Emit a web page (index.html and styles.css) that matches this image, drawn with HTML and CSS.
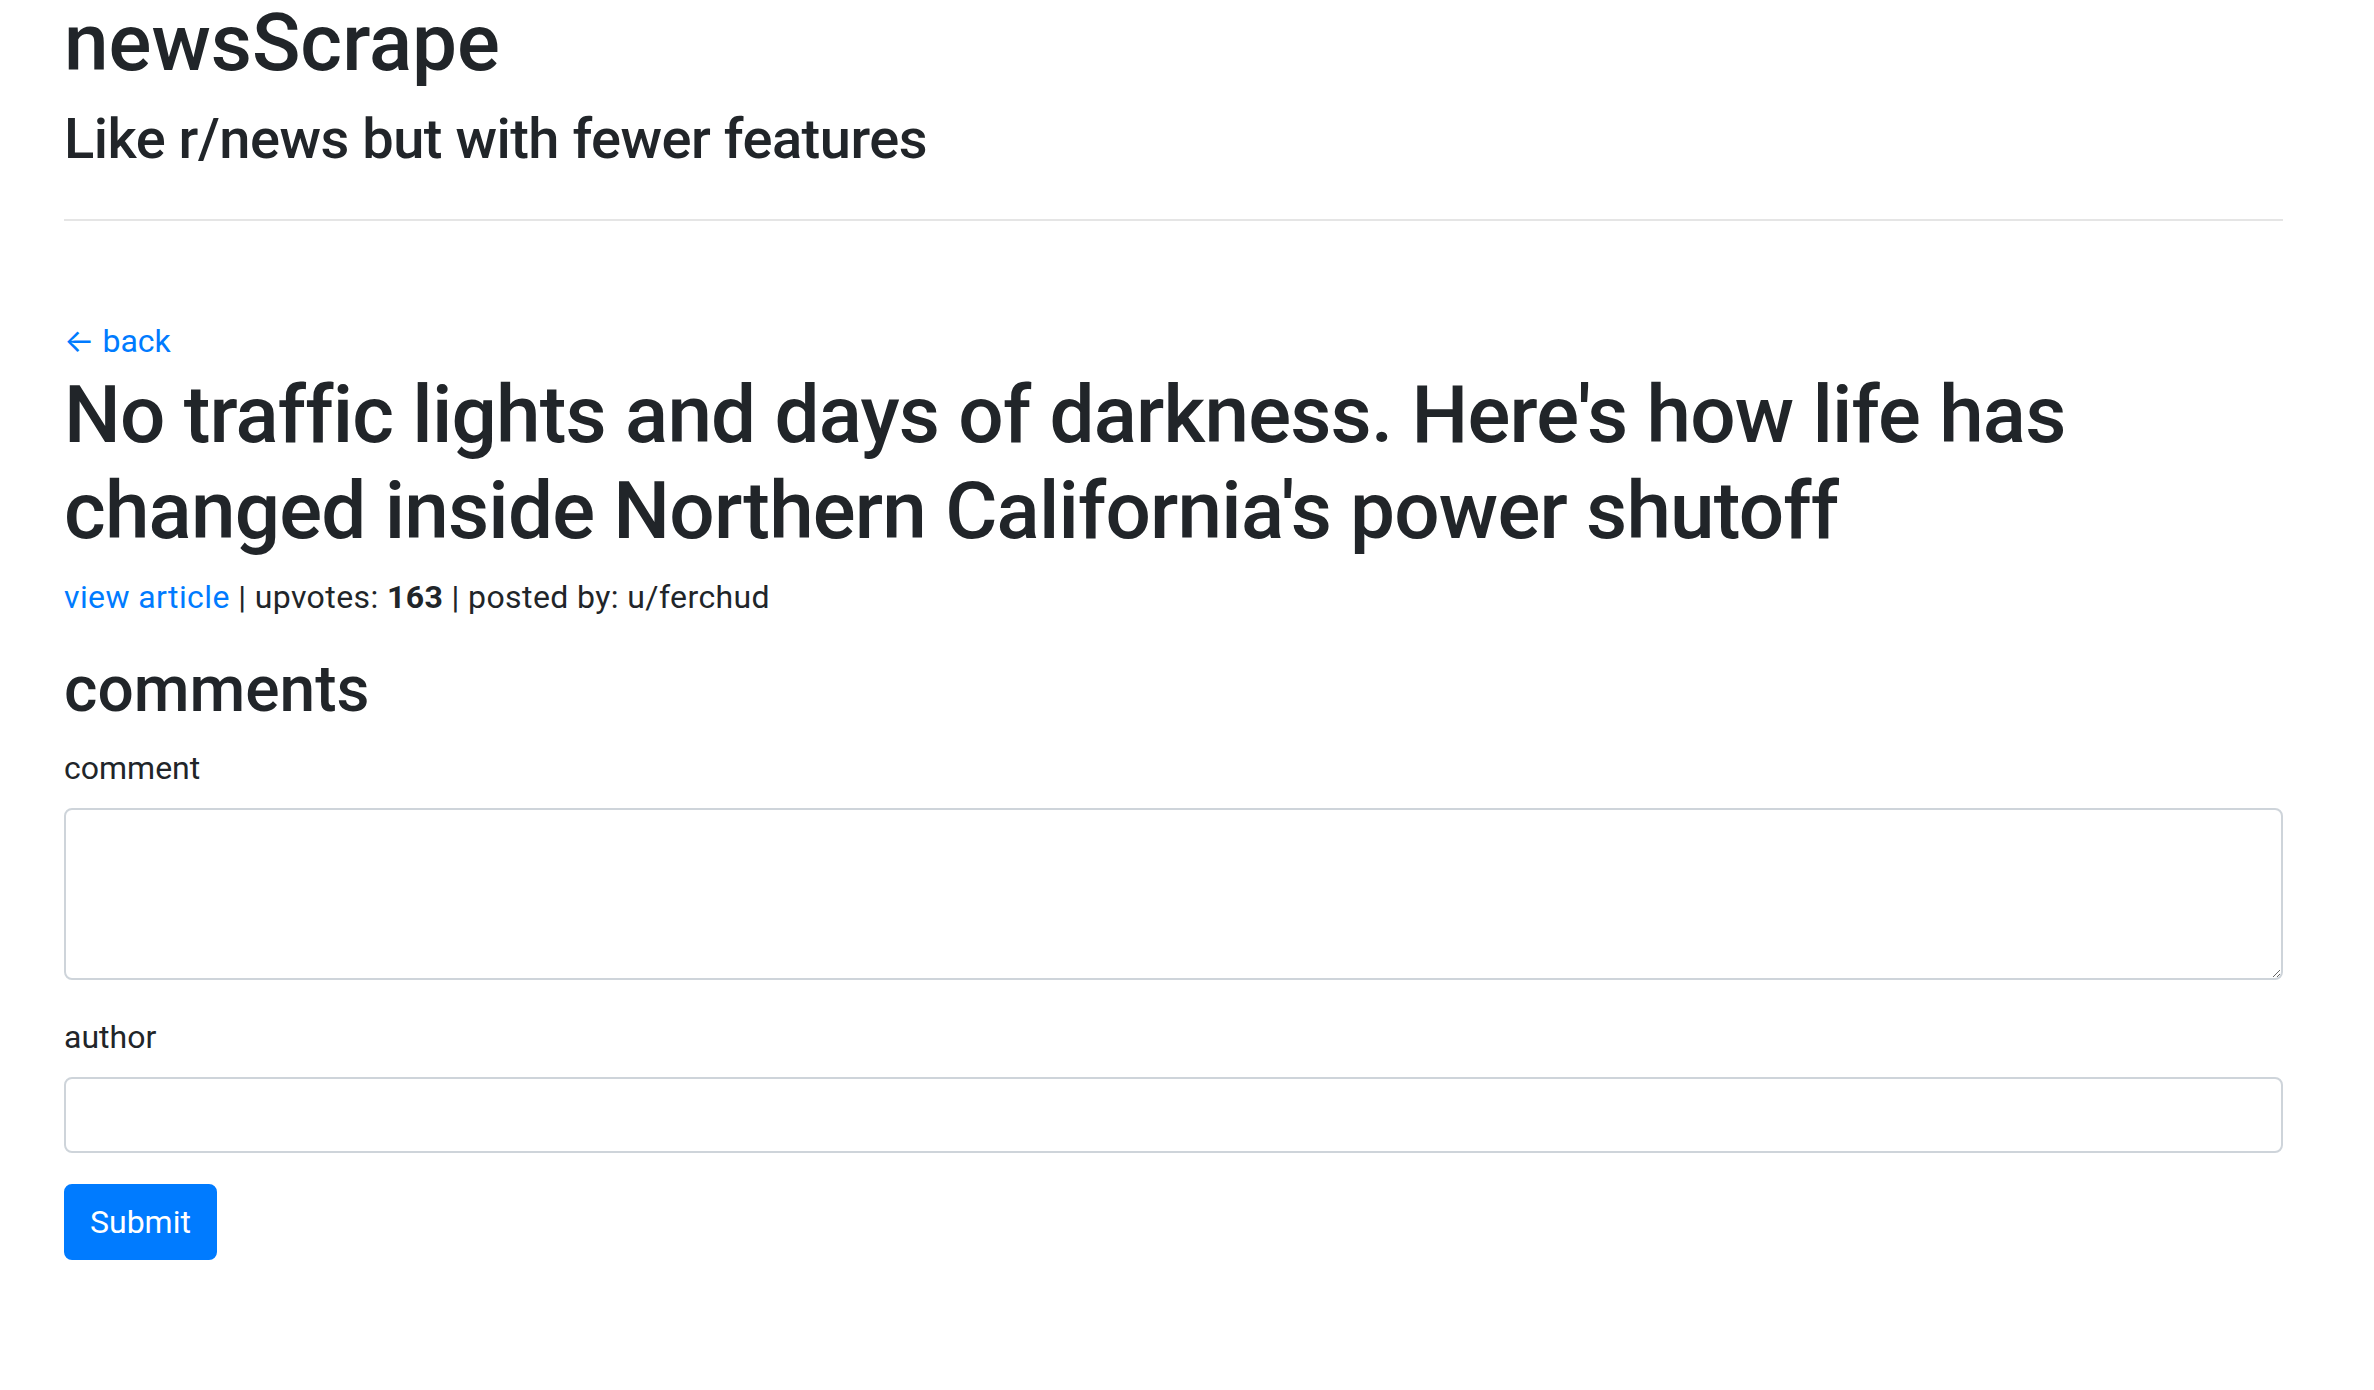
FILE: index.html
```html
<!DOCTYPE html>
<html lang="en">
<head>
<meta charset="utf-8">
<title>newsScrape</title>
<link rel="stylesheet" href="styles.css">
</head>
<body>
<div class="container">
  <h1 class="site-title">newsScrape</h1>
  <h3 class="site-tagline">Like r/news but with fewer features</h3>
  <hr class="divider">
  <div class="back-row"><a class="link" href="#">← back</a></div>
  <h1 class="post-title">No traffic lights and days of darkness. Here's how life has changed inside Northern California's power shutoff</h1>
  <p class="meta"><a class="link" href="#">view article</a> | upvotes: <b>163</b> | posted by: u/ferchud</p>
  <h2 class="section-title">comments</h2>
  <form class="comment-form">
    <div class="form-group">
      <label class="form-label" for="comment">comment</label>
      <textarea class="form-control textarea" id="comment" rows="3"></textarea>
    </div>
    <div class="form-group form-group-last">
      <label class="form-label" for="author">author</label>
      <input class="form-control input" id="author" type="text">
    </div>
    <div class="actions"><button class="btn" type="submit">Submit</button></div>
  </form>
</div>
</body>
</html>
```
FILE: styles.css
```css
* { box-sizing: border-box; }
html, body { margin: 0; padding: 0; background: #fff; }
body {
  font-family: Roboto, Inter, "Liberation Sans", sans-serif;
  font-size: 32px;
  line-height: 1.5;
  color: #212529;
}
.container {
  display: flex;
  flex-direction: column;
  align-items: stretch;
  margin: 0 91px 0 64px;
}
h1, h2, h3, p {
  margin: 0;
  font-weight: 500;
  line-height: 1.2;
}
.site-title {
  font-size: 80px;
  margin-top: -5px;
}
.site-tagline {
  font-size: 56px;
  margin-top: 15px;
  letter-spacing: -0.5px;
}
.divider {
  width: 100%;
  margin: 46px 0 0 0;
  border: 0;
  border-top: 2px solid rgba(0, 0, 0, 0.1);
  height: 0;
}
.back-row {
  margin-top: 96px;
  line-height: 1.5;
}
.link {
  color: #007bff;
  text-decoration: none;
}
.post-title {
  font-size: 80px;
  margin-top: 2px;
  letter-spacing: -0.8px;
}
.meta {
  margin-top: 14px;
  font-weight: 400;
  line-height: 1.5;
  letter-spacing: 0.4px;
}
.meta b { font-weight: 700; }
.section-title {
  font-size: 64px;
  margin-top: 31px;
}
.comment-form {
  display: flex;
  flex-direction: column;
  margin-top: 15px;
}
.form-group {
  display: flex;
  flex-direction: column;
  align-items: flex-start;
}
.form-group-last {
  margin-top: 33px;
}
.form-label {
  margin-bottom: 16px;
  line-height: 1.5;
}
.form-control {
  display: block;
  width: 100%;
  padding: 12px 24px;
  font-family: inherit;
  font-size: 32px;
  line-height: 1.5;
  color: #495057;
  background: #fff;
  border: 2px solid #ced4da;
  border-radius: 8px;
  margin: 0;
}
.textarea {
  height: 172px;
  resize: vertical;
}
.input {
  height: 76px;
}
.actions {
  margin-top: 31px;
}
.btn {
  display: inline-block;
  font-family: inherit;
  font-size: 32px;
  line-height: 1.5;
  padding: 12px 24px;
  color: #fff;
  background: #007bff;
  border: 2px solid #007bff;
  border-radius: 8px;
  font-weight: 400;
}
```
